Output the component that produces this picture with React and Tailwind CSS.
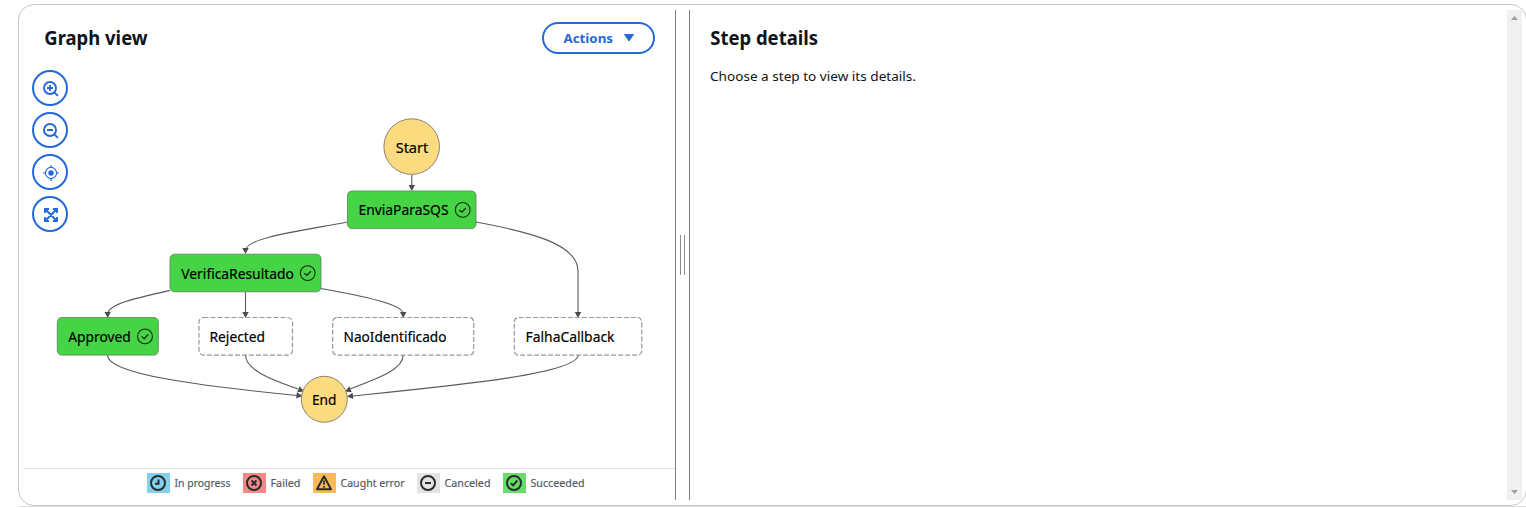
import React from "react";

const edges = [
  "M411.8 175 V186",
  "M347.5 222 C300 231 246 238 245.7 250",
  "M476 222 C530 232 578 244 578 271 V313",
  "M245.5 292 V313",
  "M170 290.5 C136 298 108 304 107.7 314",
  "M321 288.5 C362 296 403 304 403.2 314",
  "M107.5 355 C107 374 200 386 297 395.5",
  "M245.5 355 C245.5 370 272 380 298 389",
  "M403.2 355 C403.2 370 376 379 350 389",
  "M578.2 355 C578.2 374 450 386 352 396",
];

const arrows = [
  [411.8, 191, 90], [245.5, 254, 90], [578, 318, 90], [245.5, 318, 90], [107.7, 318, 90],
  [403.2, 318, 90], [302.5, 396, 6], [304, 391.5, 22], [345, 391.5, 158], [347, 396.5, 174],
];

const nodes = [
  { label: "EnviaParaSQS", x: 347.5, y: 191, w: 128.5, tx: 358.5, ty: 215, tw: 90, done: true },
  { label: "VerificaResultado", x: 170, y: 254.2, w: 151, tx: 181.3, ty: 279, tw: 112.5, done: true },
  { label: "Approved", x: 57.3, y: 317.5, w: 101, tx: 68.3, ty: 342, tw: 62.5, done: true },
  { label: "Rejected", x: 199, y: 317.5, w: 93.5, tx: 209.5, ty: 342, tw: 55.5 },
  { label: "NaoIdentificado", x: 332.7, y: 317.5, w: 141, tx: 343.5, ty: 342, tw: 103 },
  { label: "FalhaCallback", x: 514.3, y: 317.5, w: 127.5, tx: 525.5, ty: 342, tw: 89 },
];

const nodeText = "fill-black stroke-black [stroke-width:0.2px] font-['Noto_Sans',sans-serif] text-[15px]";

function Graph() {
  return (
    <svg className="block h-[390px] w-[651px]" viewBox="24 78 651 390">
      <g fill="none" stroke="#545b5e" strokeWidth="1.1">
        {edges.map((d) => <path key={d} d={d} />)}
      </g>
      {arrows.map(([x, y, a]) => (
        <path key={`${x}-${y}`} d="M0 0 L-6 -3.2 V3.2 Z" fill="#4b4b4b" transform={`translate(${x} ${y}) rotate(${a})`} />
      ))}
      <circle cx="411.7" cy="146.6" r="27.8" fill="#fbdb7f" stroke="#7d7864" strokeWidth=".9" />
      <text x="395.7" y="153" textLength="32.5" lengthAdjust="spacingAndGlyphs" className={nodeText}>Start</text>
      <circle cx="324.3" cy="399.3" r="23" fill="#fbdb7f" stroke="#7d7864" strokeWidth=".9" />
      <text x="312" y="405" textLength="24.5" lengthAdjust="spacingAndGlyphs" className={nodeText}>End</text>
      {nodes.map((n) => (
        <g key={n.label}>
          <rect x={n.x} y={n.y} width={n.w} height="37.6" rx="4.5"
            fill={n.done ? "#46d446" : "#fff"} stroke={n.done ? "#5c8c5c" : "#989898"}
            strokeDasharray={n.done ? undefined : "5 2"} strokeWidth={n.done ? 0.9 : 1.2} />
          <text x={n.tx} y={n.ty} textLength={n.tw} lengthAdjust="spacingAndGlyphs" className={nodeText}>{n.label}</text>
          {n.done && (
            <g fill="none" stroke="#142814" strokeWidth="1.1">
              <circle cx={n.x + n.w - 13.3} cy={n.y + 18.9} r="7.4" />
              <path d={`M${n.x + n.w - 16.6} ${n.y + 19} l2.500 2.200 l4 -4.200`} strokeWidth="1.3" />
            </g>
          )}
        </g>
      ))}
    </svg>
  );
}

function RoundButton({ label, children }) {
  return (
    <button aria-label={label} className="flex size-9 items-center justify-center rounded-full border-2 border-[#2469da] bg-white text-[#2469da]">
      <svg className="size-4 translate-x-px translate-y-px" viewBox="0 0 16 16" fill="none" stroke="currentColor" strokeWidth="1.9">{children}</svg>
    </button>
  );
}

const legend = [
  { label: "In progress", tw: 56, width: "w-14", box: "bg-[#83d0ef]", icon: <><circle cx="8" cy="8" r="7" /><path d="M8.5 4.5 V8.8 H5" /></> },
  { label: "Failed", tw: 30, width: "w-[30px]", box: "bg-[#f28b88]", icon: <><circle cx="8" cy="8" r="7" /><path d="M5.5 5.5 L10.5 10.5 M10.5 5.5 L5.5 10.5" /></> },
  { label: "Caught error", tw: 64, width: "w-16", box: "bg-[#fbb95b]", icon: <><path d="M8 1.3 L15 14.2 H1 Z" strokeLinejoin="round" /><path d="M8 5.5 V9.7 M8 11 V12.8" strokeWidth="1.7" /></> },
  { label: "Canceled", tw: 46, width: "w-[46px]", box: "bg-[#e4e4e4]", icon: <><circle cx="8" cy="8" r="7" /><path d="M5 8 H11" /></> },
  { label: "Succeeded", tw: 54, width: "w-[54px]", box: "bg-[#69dc69]", icon: <><circle cx="8" cy="8" r="7" /><path d="M4.8 8.2 L7.2 10.4 L11.3 5.5" /></> },
];

export default function App() {
  return (
    <div className="h-[508px] overflow-hidden bg-white pl-[18px] pt-1 font-['Noto_Sans',sans-serif] text-[#0f141a]">
      <main className="flex h-[502px] w-[1509px] rounded-2xl border border-[#c6c6cd] p-[5px]">
        <section className="flex h-[490px] w-[651px] flex-none flex-col">
          <header className="flex h-[68px] flex-none items-start justify-between px-5 pt-3">
            <h2 className="pt-px text-xl font-bold leading-[30px]">
              <svg className="block h-[30px] w-[120px] overflow-visible" viewBox="0 0 120 30"><text x="0.3" y="22" textLength="103.3" lengthAdjust="spacingAndGlyphs" fill="#0f141a">Graph view</text></svg>
            </h2>
            <button className="flex h-8 w-[113px] items-center rounded-full border-2 border-[#2469da] pl-[19px] text-[13px] font-bold text-[#2469da]">
              <svg className="h-5 w-[52px] overflow-visible" viewBox="0 0 52 20"><text x="0.5" y="15" textLength="49.5" lengthAdjust="spacingAndGlyphs" fill="currentColor">Actions</text></svg>
              <svg className="ml-2 h-2.5 w-3" viewBox="0 0 12 10"><path d="M1.5 1.5 H10.5 L6 8 Z" fill="currentColor" stroke="currentColor" strokeLinejoin="round" /></svg>
            </button>
          </header>
          <div className="relative h-[390px] flex-none">
            <Graph />
            <div className="absolute -top-2 left-2 flex flex-col gap-1.5">
              <RoundButton label="Zoom in"><circle cx="7" cy="7" r="6" /><path d="M11.3 11.3 L14.9 14.9 M4 7 H10 M7 4 V10" /></RoundButton>
              <RoundButton label="Zoom out"><circle cx="7" cy="7" r="6" /><path d="M11.3 11.3 L14.9 14.9 M4 7 H10" /></RoundButton>
              <RoundButton label="Center"><circle cx="8" cy="8" r="5.6" strokeWidth="1.1" /><circle cx="8" cy="8" r="2.7" fill="currentColor" stroke="none" /><path d="M8 0 V2.8 M8 13.2 V16 M0 8 H2.8 M13.2 8 H16" strokeWidth="1.2" /></RoundButton>
              <RoundButton label="Fit"><path d="M2 6 V2 H6 M10 2 H14 V6 M14 10 V14 H10 M6 14 H2 V10 M2 2 L14 14 M14 2 L2 14" /></RoundButton>
            </div>
          </div>
          <footer className="flex flex-none justify-start gap-[13px] border-t border-[#e2e2e5] pl-[123px] pt-1">
            {legend.map((item) => (
              <div key={item.label} className="flex items-center gap-1">
                <span className={`flex h-5 w-[23px] items-center justify-center pr-px ${item.box}`}>
                  <svg className="size-4" viewBox="0 0 16 16" fill="none" stroke="#292d2b" strokeWidth="2">{item.icon}</svg>
                </span>
                <svg className={`h-5 overflow-visible text-[11.5px] ${item.width}`}>
                  <text x="0.5" y="14" textLength={item.tw} lengthAdjust="spacingAndGlyphs" fill="#545b64" stroke="#545b64" strokeWidth="0.2">{item.label}</text>
                </svg>
              </div>
            ))}
          </footer>
        </section>
        <div className="flex h-[490px] w-[15px] flex-none items-center justify-center border-x border-[#7d7f81]">
          <div className="h-10 w-[5px] border-x border-[#8a8c8e]" />
        </div>
        <section className="h-[490px] w-[817px] flex-none pl-5 pt-[13px]">
          <h2 className="text-xl font-bold">
            <svg className="block h-[30px] w-[120px] overflow-visible" viewBox="0 0 120 30"><text x="0.3" y="22" textLength="107.7" lengthAdjust="spacingAndGlyphs" fill="#0f141a">Step details</text></svg>
          </h2>
          <p className="pt-[13px] text-[13.3px] leading-5">
            <svg className="block h-5 w-[220px] overflow-visible" viewBox="0 0 220 20"><text x="0" y="15" textLength="206" lengthAdjust="spacingAndGlyphs" fill="#0f141a">Choose a step to view its details.</text></svg>
          </p>
        </section>
        <div className="flex h-[490px] w-[15px] flex-none flex-col items-center justify-between bg-[#f0f0f0] py-1.5">
          <svg className="h-[4px] w-[7px]" viewBox="0 0 7 4"><path d="M0 4 L3.5 0 L7 4 Z" fill="#a0a0a0" /></svg>
          <svg className="h-[4px] w-[7px]" viewBox="0 0 7 4"><path d="M0 0 H7 L3.5 4 Z" fill="#a0a0a0" /></svg>
        </div>
      </main>
      <div className="ml-px h-px bg-[#dedee3]" />
    </div>
  );
}
